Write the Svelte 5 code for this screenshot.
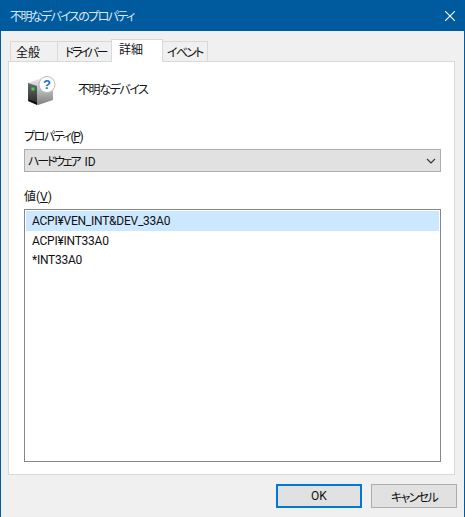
<script>
  let tabs = [
    { name: '全般', width: 48, pad: 5, spacing: 0 },
    { name: 'ドライバー', width: 55, pad: 7, spacing: -2.5 },
    { name: '詳細', width: 52, pad: 7, spacing: 0 },
    { name: 'イベント', width: 46, pad: 4, spacing: -1.8 }
  ];
  let selected = 2;
  let values = ['ACPI¥VEN_INT&DEV_33A0', 'ACPI¥INT33A0', '*INT33A0'];
</script>

<div class="window">
  <header class="titlebar">
    <span class="title">不明なデバイスのプロパティ</span>
    <svg class="close" width="10" height="10" viewBox="0 0 10 10">
      <path d="M0 0 L10 10 M10 0 L0 10" stroke="#fff" stroke-width="1.1" fill="none" />
    </svg>
  </header>

  <div class="body">
    <div class="tabs">
      {#each tabs as t, i}
        <div
          class="tab"
          class:active={i === selected}
          style="width: {t.width}px; padding-left: {t.pad}px; letter-spacing: {t.spacing}px"
        >{t.name}</div>
      {/each}
    </div>

    <section class="panel">
      <div class="device">
        <svg class="icon" width="32" height="32" viewBox="0 0 32 32">
          <defs>
            <linearGradient id="front" x1="0" y1="0" x2="0" y2="1">
              <stop offset="0" stop-color="#6a6a6a" />
              <stop offset="1" stop-color="#262626" />
            </linearGradient>
            <linearGradient id="side" x1="0" y1="0" x2="0" y2="1">
              <stop offset="0" stop-color="#e8e8e8" />
              <stop offset="1" stop-color="#7f7f7f" />
            </linearGradient>
          </defs>
          <path d="M4 11 L15 7 L29 10 L29 28 L14 33 L4 29 Z" fill="url(#side)" />
          <path d="M4 11 L13 14 L13 33 L4 29 Z" fill="url(#front)" />
          <rect x="7.5" y="15.5" width="3" height="3" fill="#2fdc4a" />
          <path d="M5 27.5 L13 30.5 L13 32.5 L5 29 Z" fill="#0c0c0c" />
          <circle cx="23" cy="12.5" r="8" fill="#fff" stroke="#b4b8bc" stroke-width="1" />
          <text x="23" y="17" text-anchor="middle" class="qmark">?</text>
        </svg>
        <span class="kana">不明なデバイス</span>
      </div>

      <label class="field-label kana" for="prop">プロパティ(<u>P</u>)</label>
      <div class="select" id="prop">
        <span><span class="narrow">ハードウェア</span> ID</span>
        <svg width="10" height="6" viewBox="0 0 10 6">
          <path d="M1 1 L5 5 L9 1" stroke="#333" stroke-width="1.1" fill="none" />
        </svg>
      </div>

      <label class="field-label value-label" for="vals">値(<u>V</u>)</label>
      <div class="list" id="vals">
        {#each values as v, i}
          <div class="row" class:sel={i === 0}>{v}</div>
        {/each}
      </div>
    </section>

    <footer class="buttons">
      <button class="default">OK</button>
      <button class="tight">キャンセル</button>
    </footer>
  </div>
</div>

<style>
  :global(body) {
    margin: 0;
  }
  .window {
    width: 465px;
    height: 517px;
    box-sizing: border-box;
    display: flex;
    flex-direction: column;
    background: #f0f0f0;
    border-left: 1px solid #005a9e;
    border-right: 1px solid #005a9e;
    font-family: Roboto, "Noto Sans CJK JP", sans-serif;
    font-size: 12px;
    font-feature-settings: "palt";
    color: #111;
    white-space: nowrap;
  }
  /* the original UI font has much narrower kana */
  .kana {
    letter-spacing: -1.4px;
  }
  .narrow {
    letter-spacing: -2.2px;
    margin-right: 2px;
  }
  .title {
    letter-spacing: -1.6px;
  }
  .titlebar {
    height: 31px;
    flex: none;
    background: #005a9e;
    display: flex;
    align-items: center;
    justify-content: space-between;
    padding: 0 9px;
    color: #dde8f2;
  }
  .body {
    flex: 1;
    display: flex;
    flex-direction: column;
    padding: 8px 9px 0 7px;
    min-height: 0;
  }
  .tabs {
    display: flex;
    flex: none;
    height: 22px;
    padding-left: 2px;
    align-items: flex-end;
    position: relative;
    z-index: 1;
  }
  .tab {
    box-sizing: border-box;
    height: 20px;
    margin-right: -1px;
    background: #f0f0f0;
    border: 1px solid #d9d9d9;
    border-bottom: none;
    line-height: 22px;
  }
  .tab.active {
    height: 23px;
    background: #fff;
    line-height: 21px;
    margin-bottom: -1px;
    position: relative;
  }
  .panel {
    flex: none;
    height: 414px;
    box-sizing: border-box;
    background: #fff;
    border: 1px solid #d9d9d9;
    padding: 10px 13px 12px 15px;
    display: flex;
    flex-direction: column;
  }
  .device {
    display: flex;
    flex: none;
    align-items: center;
    gap: 22px;
    height: 32px;
  }
  .icon {
    overflow: visible;
  }
  .qmark {
    font-family: "Liberation Sans", sans-serif;
    font-size: 13px;
    font-weight: 700;
    fill: #1f70c1;
  }
  .field-label {
    display: block;
    flex: none;
    height: 18px;
    line-height: 18px;
    margin-top: 24px;
  }
  .value-label {
    margin-top: 16px;
  }
  .select {
    box-sizing: border-box;
    flex: none;
    height: 23px;
    margin-top: 3px;
    background: #e1e1e1;
    border: 1px solid #adadad;
    display: flex;
    align-items: center;
    justify-content: space-between;
    padding: 0 4px 0 3px;
  }
  .list {
    flex: 1;
    margin-top: 3px;
    background: #fff;
    border: 1px solid #828790;
    padding: 1px;
  }
  .row {
    height: 19.5px;
    line-height: 20px;
    padding-left: 6px;
    letter-spacing: -0.24px;
  }
  .row.sel {
    background: #cce8ff;
  }
  .buttons {
    flex: none;
    display: flex;
    justify-content: flex-end;
    gap: 9px;
    padding-top: 9px;
    margin-right: -2px;
  }
  button {
    width: 86px;
    height: 24px;
    box-sizing: border-box;
    background: #e1e1e1;
    border: 1px solid #adadad;
    font: inherit;
    color: inherit;
    padding: 0;
  }
  button.default {
    border: 2px solid #0078d7;
  }
  button.tight {
    letter-spacing: -1.6px;
  }
</style>
